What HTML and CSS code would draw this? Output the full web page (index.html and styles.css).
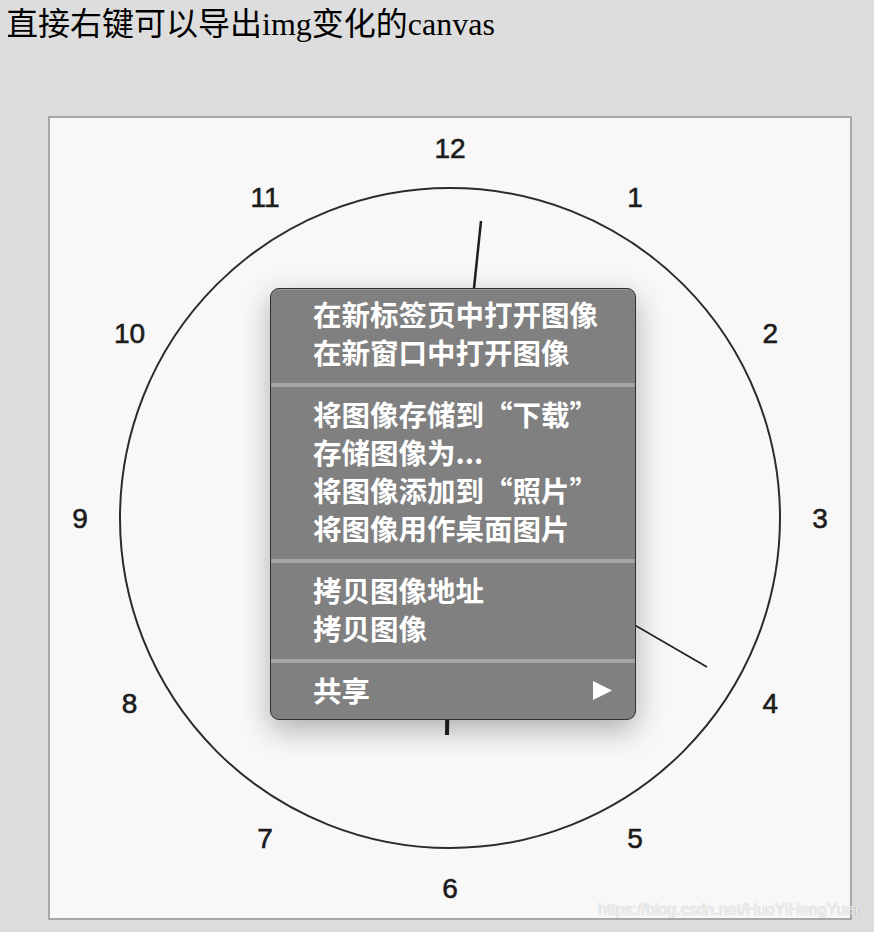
FILE: index.html
```html
<!DOCTYPE html>
<html lang="zh-CN">
<head>
<meta charset="utf-8">
<title>canvas clock</title>
<link rel="stylesheet" href="styles.css">
</head>
<body>
<div class="title">直接右键可以导出img变化的canvas</div>
<div class="stage">
  <div class="canvas-box">
    <svg class="clock" width="800" height="800" viewBox="0 0 800 800">
      <circle cx="400" cy="400" r="330" fill="none" stroke="#2b2b2b" stroke-width="2"/>
      <g class="nums" font-family="Liberation Sans, Arial, sans-serif" font-size="28" fill="#1c1c1c" stroke="#1c1c1c" stroke-width="0.6" text-anchor="middle" dominant-baseline="central">
        <text x="400" y="30">12</text>
        <text x="585" y="79.6">1</text>
        <text x="720.4" y="215">2</text>
        <text x="770" y="400">3</text>
        <text x="720.4" y="585">4</text>
        <text x="585" y="720.4">5</text>
        <text x="400" y="770">6</text>
        <text x="215" y="720.4">7</text>
        <text x="79.6" y="585">8</text>
        <text x="30" y="400">9</text>
        <text x="79.6" y="215">10</text>
        <text x="215" y="79.6">11</text>
      </g>
      <line x1="400" y1="400" x2="397" y2="617" stroke="#1e1e1e" stroke-width="4"/>
      <line x1="400" y1="400" x2="431" y2="103" stroke="#1e1e1e" stroke-width="2.5"/>
      <line x1="400" y1="400" x2="657" y2="549" stroke="#1e1e1e" stroke-width="1.6"/>
    </svg>
    <div class="menu">
      <div class="item">在新标签页中打开图像</div>
      <div class="item">在新窗口中打开图像</div>
      <div class="sep"></div>
      <div class="item">将图像存储到“下载”</div>
      <div class="item">存储图像为...</div>
      <div class="item">将图像添加到“照片”</div>
      <div class="item">将图像用作桌面图片</div>
      <div class="sep"></div>
      <div class="item">拷贝图像地址</div>
      <div class="item">拷贝图像</div>
      <div class="sep"></div>
      <div class="item">共享<svg class="arrow" width="19" height="19" viewBox="0 0 19 19"><polygon points="0,0 19,9.5 0,19" fill="#ffffff"/></svg></div>
    </div>
    <div class="watermark">https://blog.csdn.net/HuoYiHengYuan</div>
  </div>
</div>
</body>
</html>
```
FILE: styles.css
```css
html, body {
  background: #dddddd;
}
body {
  margin: 8px;
  font-family: "Liberation Serif", "Noto Sans CJK SC", serif;
}
.title {
  font-size: 32px;
  line-height: 32px;
  color: #000;
  margin: 0 0 0 -2px;
}
.stage {
  padding: 76px 0 0 40px;
}
.canvas-box {
  position: relative;
  width: 800px;
  height: 800px;
  border: 2px solid #a8a8a8;
  background: #f8f8f8;
}
.clock {
  display: block;
}
.menu {
  position: absolute;
  left: 220px;
  top: 170px;
  width: 366px;
  box-sizing: border-box;
  padding: 6px 0 10px;
  background: #808080;
  border: 1px solid #2f2f2f;
  border-radius: 9px;
  box-shadow: 0 10px 30px rgba(0, 0, 0, 0.3), inset 0 1px 0 #9c9c9c;
}
.item {
  display: flex;
  align-items: center;
  justify-content: space-between;
  height: 38px;
  line-height: 38px;
  padding: 0 23px 0 42px;
  color: #ffffff;
  font-family: "Noto Sans CJK SC", "Noto Sans", sans-serif;
  font-size: 28.5px;
  font-weight: 700;
  white-space: nowrap;
}
.arrow {
  display: block;
}
.sep {
  height: 4px;
  margin: 12px 0 8px;
  background: #a4a4a4;
}
.watermark {
  position: absolute;
  left: 548px;
  top: 783px;
  font-family: "Liberation Sans", Arial, sans-serif;
  font-size: 16px;
  line-height: 18px;
  color: rgba(255, 255, 255, 0.85);
  text-shadow: 0 0 1px rgba(0, 0, 0, 0.35);
  white-space: nowrap;
}
```
